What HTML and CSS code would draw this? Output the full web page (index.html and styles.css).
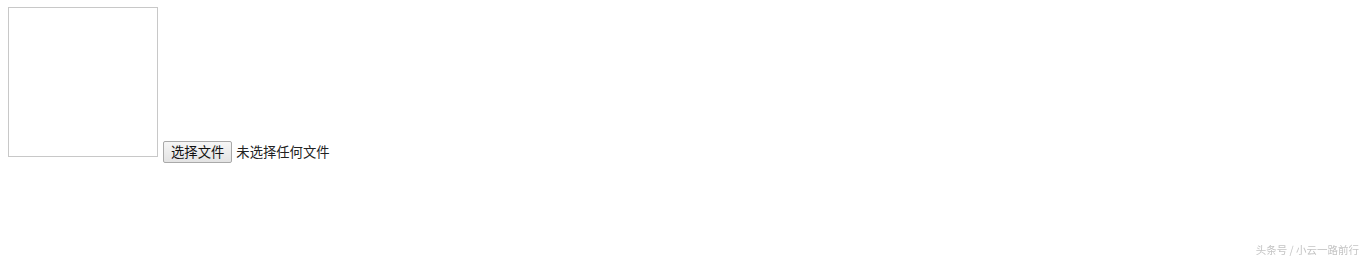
FILE: index.html
```html
<!DOCTYPE html>
<html lang="zh-CN">
<head>
    <meta charset="UTF-8">
    <title>上传预览</title>
    <link rel="stylesheet" href="styles.css">
</head>
<body>
    <div class="upload">
        <div class="preview"></div>
        <button class="file-button" type="button">选择文件</button>
        <span class="file-name">未选择任何文件</span>
    </div>
    <div class="watermark">头条号 / 小云一路前行</div>
</body>
</html>
```

FILE: styles.css
```css
body {
    margin: 7px 8px 0;
    font-family: "Noto Sans CJK SC", "Microsoft YaHei", sans-serif;
    font-size: 13.33px;
    color: #222;
    background: #fff;
}
.preview {
    display: inline-block;
    width: 148px;
    height: 148px;
    border: 1px solid #c8c8c8;
    vertical-align: baseline;
}
.file-button {
    font-family: inherit;
    font-size: 13.33px;
    color: #111;
    height: 22px;
    padding: 0 7px;
    margin-left: 2px;
    border: 1px solid #a9a9a9;
    border-radius: 2px;
    background: linear-gradient(#f6f6f6, #e3e3e3);
    line-height: 18px;
}
.file-name {
    margin-left: 1px;
}
.watermark {
    position: fixed;
    right: 5px;
    bottom: 3px;
    font-size: 10.5px;
    color: #c4c4c4;
}
```
